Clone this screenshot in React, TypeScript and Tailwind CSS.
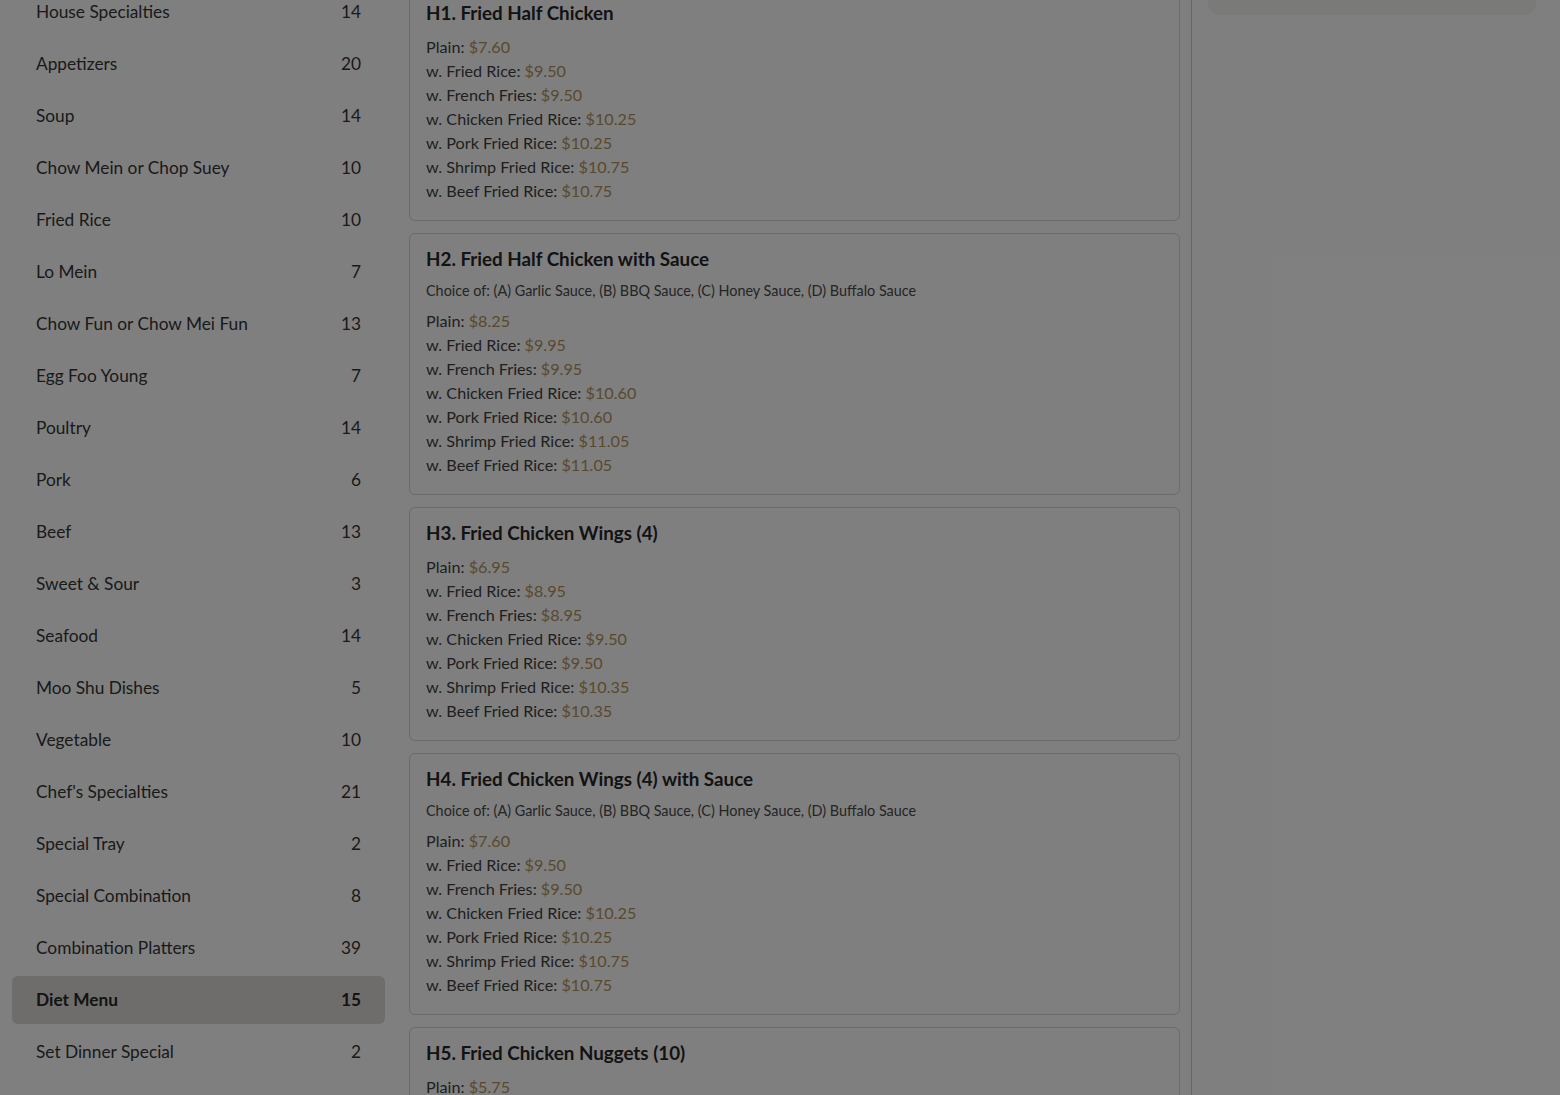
import React from 'react';

type Category = { name: string; count: number };
type Dish = { code: string; title: string; note?: string; prices: [string, string][] };

const categories: Category[] = [
    { name: 'House Specialties', count: 14 },
    { name: 'Appetizers', count: 20 },
    { name: 'Soup', count: 14 },
    { name: 'Chow Mein or Chop Suey', count: 10 },
    { name: 'Fried Rice', count: 10 },
    { name: 'Lo Mein', count: 7 },
    { name: 'Chow Fun or Chow Mei Fun', count: 13 },
    { name: 'Egg Foo Young', count: 7 },
    { name: 'Poultry', count: 14 },
    { name: 'Pork', count: 6 },
    { name: 'Beef', count: 13 },
    { name: 'Sweet & Sour', count: 3 },
    { name: 'Seafood', count: 14 },
    { name: 'Moo Shu Dishes', count: 5 },
    { name: 'Vegetable', count: 10 },
    { name: "Chef's Specialties", count: 21 },
    { name: 'Special Tray', count: 2 },
    { name: 'Special Combination', count: 8 },
    { name: 'Combination Platters', count: 39 },
    { name: 'Diet Menu', count: 15 },
    { name: 'Set Dinner Special', count: 2 },
];

const SAUCES = 'Choice of: (A) Garlic Sauce, (B) BBQ Sauce, (C) Honey Sauce, (D) Buffalo Sauce';

// builds the usual plain / w. rice price ladder
const ladder = (p: string[]): [string, string][] => [
    ['Plain', p[0]],
    ['w. Fried Rice', p[1]],
    ['w. French Fries', p[2]],
    ['w. Chicken Fried Rice', p[3]],
    ['w. Pork Fried Rice', p[4]],
    ['w. Shrimp Fried Rice', p[5]],
    ['w. Beef Fried Rice', p[6]],
];

const dishes: Dish[] = [
    {
        code: 'H1',
        title: 'Fried Half Chicken',
        prices: ladder(['$7.60', '$9.50', '$9.50', '$10.25', '$10.25', '$10.75', '$10.75']),
    },
    {
        code: 'H2',
        title: 'Fried Half Chicken with Sauce',
        note: SAUCES,
        prices: ladder(['$8.25', '$9.95', '$9.95', '$10.60', '$10.60', '$11.05', '$11.05']),
    },
    {
        code: 'H3',
        title: 'Fried Chicken Wings (4)',
        prices: ladder(['$6.95', '$8.95', '$8.95', '$9.50', '$9.50', '$10.35', '$10.35']),
    },
    {
        code: 'H4',
        title: 'Fried Chicken Wings (4) with Sauce',
        note: SAUCES,
        prices: ladder(['$7.60', '$9.50', '$9.50', '$10.25', '$10.25', '$10.75', '$10.75']),
    },
    {
        code: 'H5',
        title: 'Fried Chicken Nuggets (10)',
        prices: ladder(['$5.75', '$7.75', '$7.75', '$8.50', '$8.50', '$9.25', '$9.25']),
    },
];

function DishCard({ dish }: { dish: Dish }) {
    return (
        <div className="rounded-md border border-[#d6d6d6] bg-white px-4 pt-[11px] pb-[17px]">
            <h3 className="mb-2 text-[18.8px] leading-7 font-bold text-[#262626]">
                {dish.code}. {dish.title}
            </h3>
            {dish.note && <p className="mb-2 text-[14.4px] leading-5 text-[#4a4a4a]">{dish.note}</p>}
            <ul className="text-[16.2px] leading-6 text-[#3e3e3e]">
                {dish.prices.map(([label, price]) => (
                    <li key={label}>
                        {label}: <span className="text-[#b4925c]">{price}</span>
                    </li>
                ))}
            </ul>
        </div>
    );
}

export default function App() {
    const active = 'Diet Menu';

    return (
        <div
            className="relative h-[1095px] overflow-hidden bg-white"
            style={{ fontFamily: 'Lato, "Open Sans", sans-serif' }}
        >
            <div className="flex px-3">
                {/* Category sidebar */}
                <nav className="-mt-[12px] flex w-[373px] shrink-0 flex-col gap-1">
                    {categories.map(c => {
                        const on = c.name === active;
                        return (
                            <div
                                key={c.name}
                                className={`flex h-12 items-center justify-between rounded-md px-6 text-[17.3px] ${
                                    on ? 'bg-[#dedbd7] font-bold text-[#262626]' : 'text-[#353535]'
                                }`}
                            >
                                <span>{c.name}</span>
                                <span>{c.count}</span>
                            </div>
                        );
                    })}
                </nav>

                {/* Dish list */}
                <main className="ml-6 w-[783px] shrink-0 border-r border-[#cfcfcf] pr-[11px]">
                    <div className="-mt-[13px] flex flex-col gap-3">
                        {dishes.map(d => (
                            <DishCard key={d.code} dish={d} />
                        ))}
                    </div>
                </main>

                {/* Cart panel */}
                <aside className="ml-4 w-[328px] shrink-0">
                    <div className="-mt-4 h-[31px] rounded-xl bg-[#f5f4f0]" />
                </aside>
            </div>

            {/* modal backdrop */}
            <div className="absolute inset-0 bg-black/50" />
        </div>
    );
}
